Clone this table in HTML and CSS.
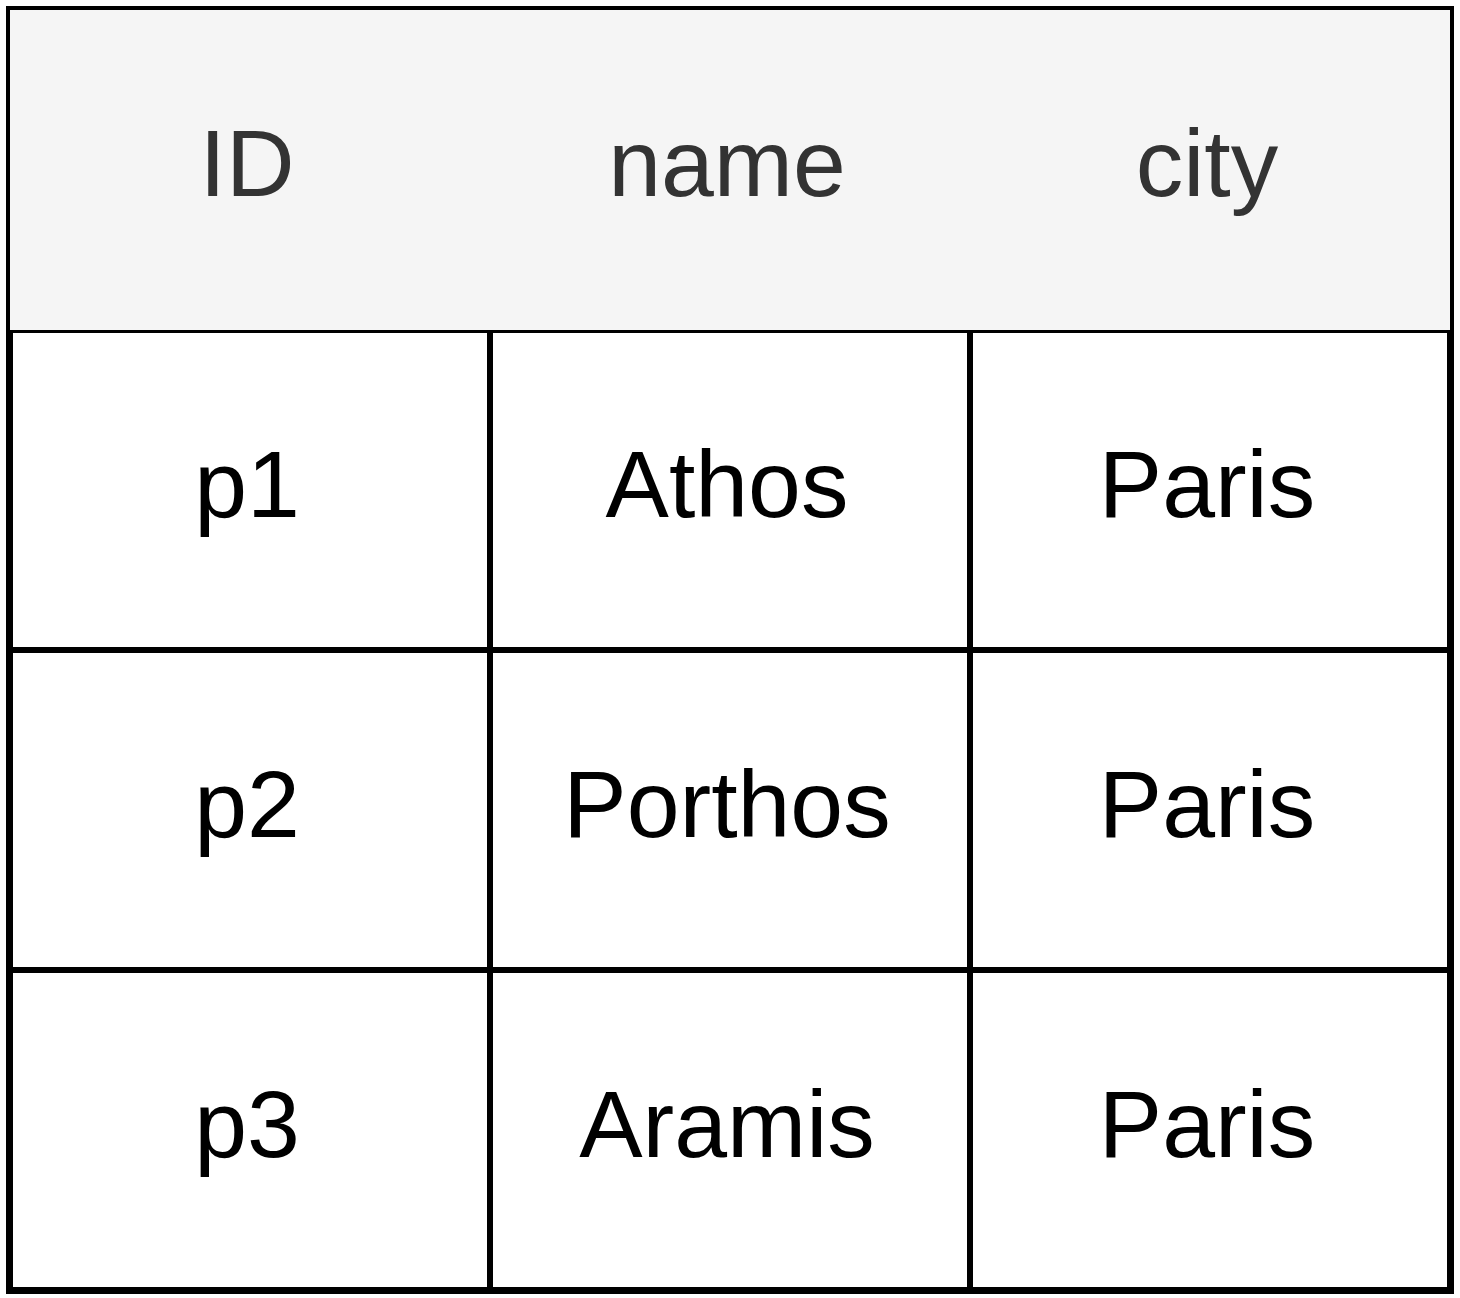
FILE: index.html
```html
<!DOCTYPE html>
<html>
<head>
<meta charset="utf-8">
<link rel="stylesheet" href="styles.css">
</head>
<body>
<div class="table">
  <div class="head">
    <div class="hcell">ID</div>
    <div class="hcell">name</div>
    <div class="hcell">city</div>
  </div>
  <div class="body">
    <div class="cell first">p1</div>
    <div class="cell first">Athos</div>
    <div class="cell first">Paris</div>
    <div class="cell">p2</div>
    <div class="cell">Porthos</div>
    <div class="cell">Paris</div>
    <div class="cell">p3</div>
    <div class="cell">Aramis</div>
    <div class="cell">Paris</div>
  </div>
</div>
</body>
</html>
```

FILE: styles.css
```css
html, body {
  margin: 0;
  padding: 0;
  background: #ffffff;
}
body {
  padding: 6px 0 0 6px;
  font-family: "Liberation Sans", Arial, sans-serif;
}
.table {
  width: 1448px;
  height: 1288px;
  box-sizing: border-box;
  border: 4px solid #000;
  display: flex;
  flex-direction: column;
}
.head {
  height: 323px;
  box-sizing: border-box;
  background: #f5f5f5;
  border-bottom: 3px solid #000;
  display: grid;
  grid-template-columns: repeat(3, 1fr);
}
.hcell {
  display: flex;
  align-items: center;
  justify-content: center;
  padding-bottom: 13px;
  padding-right: 6px;
  font-size: 95px;
  color: #333333;
}
.body {
  flex: 1;
  display: grid;
  grid-template-columns: repeat(3, 1fr);
  grid-template-rows: 317px 320px 320px;
}
.cell {
  border: 3px solid #000;
  display: flex;
  align-items: center;
  justify-content: center;
  padding-bottom: 11px;
  padding-right: 6px;
  font-size: 95px;
  color: #000;
}
.cell.first {
  border-top: none;
}
```
